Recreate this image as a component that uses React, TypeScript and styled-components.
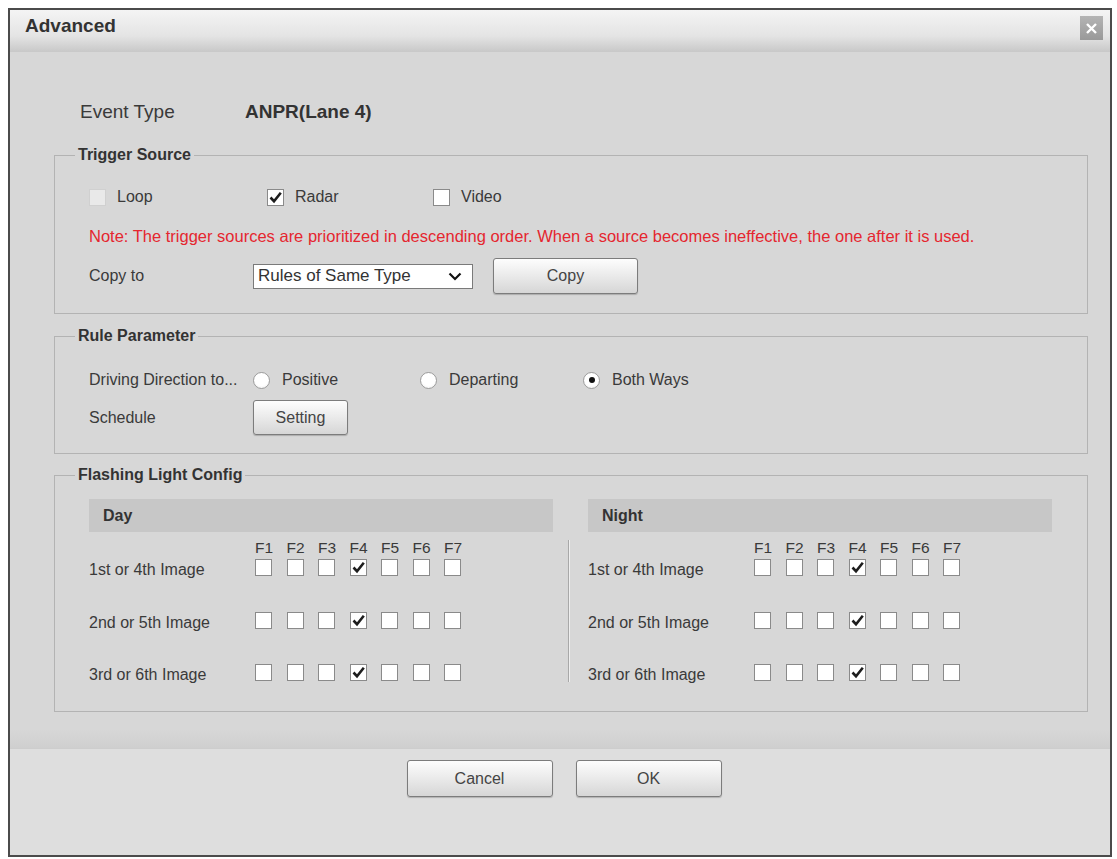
import React from "react";
import styled, { createGlobalStyle } from "styled-components";

const GlobalStyle = createGlobalStyle`
  html, body {
    margin: 0;
    padding: 0;
    background: #fff;
  }
  body {
    font-family: "Liberation Sans", Arial, sans-serif;
    color: #3a3a3a;
  }
`;

const Page = styled.div`
  width: 1117px;
  height: 859px;
  overflow: hidden;
  padding: 8px 0 0 8px;
  box-sizing: border-box;
`;

const Dialog = styled.div`
  width: 1104px;
  height: 849px;
  box-sizing: border-box;
  border: 2px solid #4b4b4b;
  display: flex;
  flex-direction: column;
  background: #d7d7d7;
`;

const TitleBar = styled.div`
  height: 42px;
  flex: none;
  display: flex;
  align-items: flex-start;
  justify-content: space-between;
  padding: 5px 7px 0 15px;
  box-sizing: border-box;
  background: linear-gradient(#f4f4f4, #e4e4e4 62%, #c8c8c8);
`;

const Title = styled.div`
  font-size: 19px;
  font-weight: bold;
  line-height: 22px;
  color: #333;
`;

const CloseBox = styled.div`
  width: 23px;
  height: 24px;
  margin-top: 1px;
  background: linear-gradient(#b4b4b4, #999);
  display: flex;
  align-items: center;
  justify-content: center;
`;

const Body = styled.div`
  flex: 1;
  padding: 48px 22px 0 44px;
  background: linear-gradient(#d7d7d7 0, #d7d7d7 calc(100% - 18px), #cfcfcf 100%);
`;

const EventRow = styled.div`
  height: 24px;
  display: flex;
  align-items: center;
  padding-left: 26px;
  font-size: 19px;
`;

const EventLabel = styled.span`
  width: 165px;
`;

const EventValue = styled.span`
  font-weight: bold;
  color: #333;
`;

const Group = styled.fieldset<{ $top: number }>`
  margin: ${(p) => p.$top}px 0 0;
  padding: 0 35px 0 20px;
  border: 1px solid #b3b3b3;
  min-width: 0;
`;

const Legend = styled.legend`
  padding: 0 3px;
  font-size: 16px;
  font-weight: bold;
  line-height: 20px;
  color: #333;
`;

const GroupContent = styled.div<{ $pt: number; $pb: number }>`
  padding: ${(p) => p.$pt}px 0 ${(p) => p.$pb}px 14px;
`;

const CheckRow = styled.div`
  display: flex;
  height: 24px;
  align-items: center;
`;

const CheckItem = styled.label<{ $w?: number }>`
  display: flex;
  align-items: center;
  gap: 11px;
  width: ${(p) => (p.$w ? `${p.$w}px` : "auto")};
  font-size: 16px;
`;

const Note = styled.div`
  margin-top: 17px;
  height: 20px;
  line-height: 20px;
  color: #e5262f;
  font-size: 16.5px;
  white-space: nowrap;
`;

const FormRow = styled.div<{ $top: number; $h: number }>`
  display: flex;
  align-items: center;
  margin-top: ${(p) => p.$top}px;
  height: ${(p) => p.$h}px;
  font-size: 16px;
`;

const FormLabel = styled.span`
  width: 164px;
  flex: none;
`;

const Select = styled.div`
  width: 220px;
  height: 25px;
  box-sizing: border-box;
  border: 1px solid #7a7a7a;
  background: #fff;
  font-size: 17px;
  color: #333;
  display: flex;
  align-items: center;
  justify-content: space-between;
  padding: 0 10px 0 4px;
`;

const Button = styled.div<{ $w: number; $h: number }>`
  width: ${(p) => p.$w}px;
  height: ${(p) => p.$h}px;
  box-sizing: border-box;
  border: 1px solid #7c7c7c;
  border-radius: 3px;
  background: linear-gradient(#fdfdfd, #ececec 45%, #d6d6d6);
  box-shadow: 0 1px 1px rgba(0, 0, 0, 0.2);
  display: flex;
  align-items: center;
  justify-content: center;
  font-size: 16px;
  color: #444;
`;

const RadioItem = styled.label<{ $w?: number }>`
  display: flex;
  align-items: center;
  gap: 12px;
  width: ${(p) => (p.$w ? `${p.$w}px` : "auto")};
`;

const RadioCircle = styled.span`
  width: 17px;
  height: 17px;
  box-sizing: border-box;
  border-radius: 50%;
  border: 1px solid #9c9c9c;
  background: radial-gradient(circle at 50% 40%, #fff 55%, #eaeaea);
  display: flex;
  align-items: center;
  justify-content: center;
`;

const RadioDot = styled.span`
  width: 6px;
  height: 6px;
  border-radius: 50%;
  background: #111;
`;

const Box = styled.span<{ $disabled?: boolean }>`
  width: 17px;
  height: 17px;
  box-sizing: border-box;
  border: 1px solid ${(p) => (p.$disabled ? "#d0d0d0" : "#8a8a8a")};
  background: ${(p) => (p.$disabled ? "#e9e9e9" : "#fff")};
  display: flex;
  align-items: center;
  justify-content: center;
  flex: none;
`;

const LightGrid = styled.div`
  display: grid;
  grid-template-columns: 1fr 35px 1fr;
`;

const ShiftBar = styled.div`
  height: 33px;
  line-height: 33px;
  background: #c7c7c7;
  font-size: 16px;
  font-weight: bold;
  color: #333;
  padding-left: 14px;
`;

const Divider = styled.div`
  width: 1px;
  height: 142px;
  margin: 8px 0 0 15px;
  background: #a8a8a8;
  box-shadow: 1px 0 0 #efefef;
`;

const LightTable = styled.div`
  padding-top: 9px;
`;

const TableRow = styled.div<{ $top: number; $h: number }>`
  display: grid;
  grid-template-columns: 166px repeat(7, 31.5px);
  align-items: center;
  height: ${(p) => p.$h}px;
  margin-top: ${(p) => p.$top}px;
  font-size: 16px;
`;

const RowLabel = styled.span`
  margin-top: 6px;
  white-space: nowrap;
`;

const FLabel = styled.span`
  width: 17px;
  text-align: center;
  font-size: 15.5px;
  line-height: 13px;
`;

const Footer = styled.div`
  height: 107px;
  flex: none;
  box-sizing: border-box;
  background: #dedede;
  border-top: 1px solid #cdcdcd;
  display: flex;
  justify-content: center;
  align-items: flex-start;
  gap: 23px;
  padding: 11px 0 0 8px;
`;

function CheckMark() {
  return (
    <svg width="15" height="15" viewBox="0 0 15 15">
      <path d="M2.5 7.5 L6 11.2 L12.8 2.8" fill="none" stroke="#1d1d1d" strokeWidth="2.6" />
    </svg>
  );
}

function Check({ checked, disabled }: { checked?: boolean; disabled?: boolean }) {
  return <Box $disabled={disabled}>{checked && <CheckMark />}</Box>;
}

function Radio({ checked }: { checked?: boolean }) {
  return <RadioCircle>{checked && <RadioDot />}</RadioCircle>;
}

const flashes = ["F1", "F2", "F3", "F4", "F5", "F6", "F7"];
const images = [
  { label: "1st or 4th Image", top: 1 },
  { label: "2nd or 5th Image", top: 35 },
  { label: "3rd or 6th Image", top: 34 },
];

function LightTableBlock() {
  return (
    <LightTable>
      <TableRow $top={0} $h={13}>
        <span />
        {flashes.map((f) => (
          <FLabel key={f}>{f}</FLabel>
        ))}
      </TableRow>
      {images.map((img) => (
        <TableRow key={img.label} $top={img.top} $h={18}>
          <RowLabel>{img.label}</RowLabel>
          {flashes.map((f) => (
            <Check key={f} checked={f === "F4"} />
          ))}
        </TableRow>
      ))}
    </LightTable>
  );
}

export default function App() {
  return (
    <>
      <GlobalStyle />
      <Page>
        <Dialog>
          <TitleBar>
            <Title>Advanced</Title>
            <CloseBox>
              <svg width="13" height="13" viewBox="0 0 13 13">
                <path d="M2 2 L11 11 M11 2 L2 11" stroke="#fff" strokeWidth="2.4" />
              </svg>
            </CloseBox>
          </TitleBar>

          <Body>
            <EventRow>
              <EventLabel>Event Type</EventLabel>
              <EventValue>ANPR(Lane 4)</EventValue>
            </EventRow>

            <Group $top={21}>
              <Legend>Trigger Source</Legend>
              <GroupContent $pt={20} $pb={19}>
                <CheckRow>
                  <CheckItem $w={178}>
                    <Check disabled />
                    Loop
                  </CheckItem>
                  <CheckItem $w={166}>
                    <Check checked />
                    Radar
                  </CheckItem>
                  <CheckItem>
                    <Check />
                    Video
                  </CheckItem>
                </CheckRow>
                <Note>
                  Note: The trigger sources are prioritized in descending order. When a source becomes
                  ineffective, the one after it is used.
                </Note>
                <FormRow $top={12} $h={36}>
                  <FormLabel>Copy to</FormLabel>
                  <Select>
                    Rules of Same Type
                    <svg width="14" height="9" viewBox="0 0 14 9">
                      <polyline points="1.5,1.5 7,7 12.5,1.5" fill="none" stroke="#111" strokeWidth="2.2" />
                    </svg>
                  </Select>
                  <Button $w={145} $h={36} style={{ marginLeft: 20 }}>
                    Copy
                  </Button>
                </FormRow>
              </GroupContent>
            </Group>

            <Group $top={12}>
              <Legend>Rule Parameter</Legend>
              <GroupContent $pt={22} $pb={18}>
                <FormRow $top={0} $h={24}>
                  <FormLabel>Driving Direction to...</FormLabel>
                  <RadioItem $w={167}>
                    <Radio />
                    Positive
                  </RadioItem>
                  <RadioItem $w={163}>
                    <Radio />
                    Departing
                  </RadioItem>
                  <RadioItem>
                    <Radio checked />
                    Both Ways
                  </RadioItem>
                </FormRow>
                <FormRow $top={8} $h={35}>
                  <FormLabel>Schedule</FormLabel>
                  <Button $w={95} $h={35}>
                    Setting
                  </Button>
                </FormRow>
              </GroupContent>
            </Group>

            <Group $top={11}>
              <Legend>Flashing Light Config</Legend>
              <GroupContent $pt={14} $pb={29}>
                <LightGrid>
                  <ShiftBar>Day</ShiftBar>
                  <span />
                  <ShiftBar>Night</ShiftBar>
                  <LightTableBlock />
                  <Divider />
                  <LightTableBlock />
                </LightGrid>
              </GroupContent>
            </Group>
          </Body>

          <Footer>
            <Button $w={146} $h={37}>
              Cancel
            </Button>
            <Button $w={146} $h={37}>
              OK
            </Button>
          </Footer>
        </Dialog>
      </Page>
    </>
  );
}
